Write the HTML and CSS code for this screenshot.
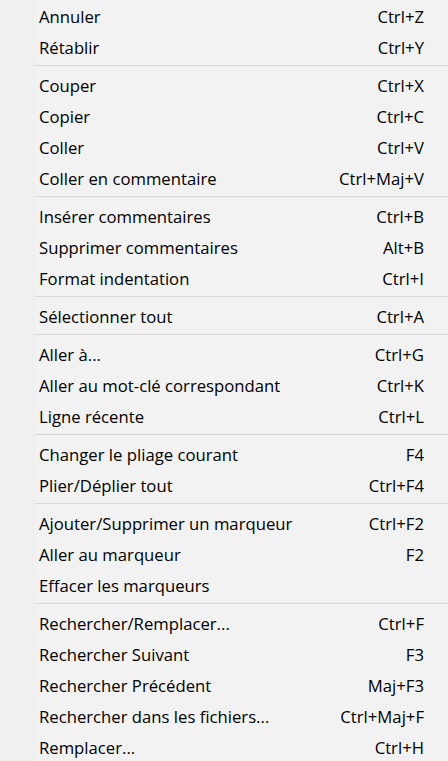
FILE: index.html
```html
<!DOCTYPE html>
<html lang="fr">
<head>
    <meta charset="UTF-8">
    <title>Menu</title>
    <link rel="stylesheet" href="styles.css">
</head>
<body>

<!-- menu contextuel -->
<div class="menu">
    <div class="item"><span>Annuler</span><span>Ctrl+Z</span></div>
    <div class="item"><span>Rétablir</span><span>Ctrl+Y</span></div>
    <div class="sep"></div>
    <div class="item"><span>Couper</span><span>Ctrl+X</span></div>
    <div class="item"><span>Copier</span><span>Ctrl+C</span></div>
    <div class="item"><span>Coller</span><span>Ctrl+V</span></div>
    <div class="item"><span>Coller en commentaire</span><span>Ctrl+Maj+V</span></div>
    <div class="sep"></div>
    <div class="item"><span>Insérer commentaires</span><span>Ctrl+B</span></div>
    <div class="item"><span>Supprimer commentaires</span><span>Alt+B</span></div>
    <div class="item"><span>Format indentation</span><span>Ctrl+I</span></div>
    <div class="sep"></div>
    <div class="item"><span>Sélectionner tout</span><span>Ctrl+A</span></div>
    <div class="sep"></div>
    <div class="item"><span>Aller à...</span><span>Ctrl+G</span></div>
    <div class="item"><span>Aller au mot-clé correspondant</span><span>Ctrl+K</span></div>
    <div class="item"><span>Ligne récente</span><span>Ctrl+L</span></div>
    <div class="sep"></div>
    <div class="item"><span>Changer le pliage courant</span><span>F4</span></div>
    <div class="item"><span>Plier/Déplier tout</span><span>Ctrl+F4</span></div>
    <div class="sep"></div>
    <div class="item"><span>Ajouter/Supprimer un marqueur</span><span>Ctrl+F2</span></div>
    <div class="item"><span>Aller au marqueur</span><span>F2</span></div>
    <div class="item"><span>Effacer les marqueurs</span><span></span></div>
    <div class="sep"></div>
    <div class="item"><span>Rechercher/Remplacer...</span><span>Ctrl+F</span></div>
    <div class="item"><span>Rechercher Suivant</span><span>F3</span></div>
    <div class="item"><span>Rechercher Précédent</span><span>Maj+F3</span></div>
    <div class="item"><span>Rechercher dans les fichiers...</span><span>Ctrl+Maj+F</span></div>
    <div class="item"><span>Remplacer...</span><span>Ctrl+H</span></div>
</div>

</body>
</html>
```

FILE: styles.css
```css
html, body {
    margin: 0;
    height: 100%;
    background-color: #f2f2f2;
}

.menu {
    display: flex;
    flex-direction: column;
    height: 100%;
    padding-top: 1px;
    box-sizing: border-box;
    background: linear-gradient(to right, #f0f0f0 35px, #f2f2f2 35px);
    font-family: "Open Sans", "Noto Sans", sans-serif;
    font-size: 16.7px;
    color: #000;
}

.item {
    display: flex;
    justify-content: space-between;
    align-items: center;
    flex: none;
    height: 31px;
    padding: 0 24px 0 39px;
}

.sep {
    flex: none;
    height: 1px;
    margin: 2px 0 4px 35px;
    background-color: #d7d7d7;
}
```
